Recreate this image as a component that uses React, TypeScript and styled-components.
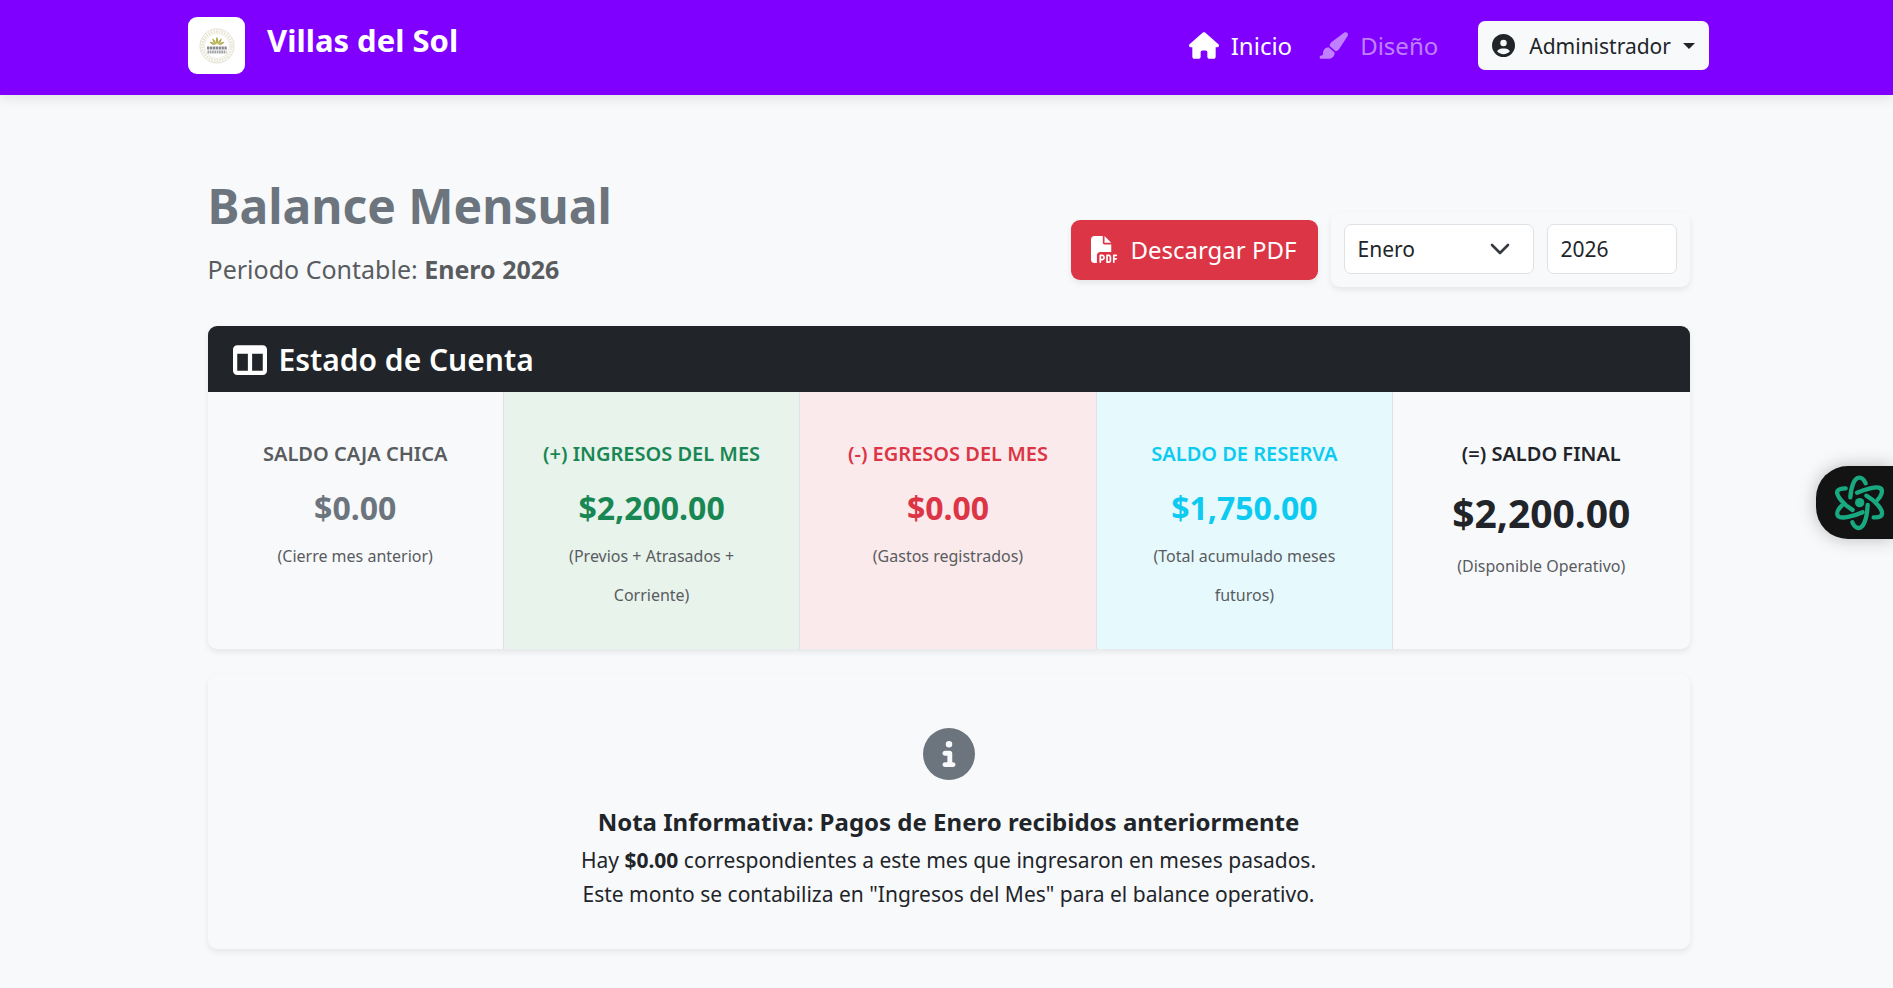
import React, { useState } from 'react';
import styled, { createGlobalStyle } from 'styled-components';
import {
  FaCircleInfo,
  FaCircleUser,
  FaFilePdf,
  FaHouse,
  FaPaintbrush,
  FaTableColumns,
} from 'react-icons/fa6';

const GlobalStyle = createGlobalStyle`
  *, *::before, *::after { box-sizing: border-box; }
  body {
    margin: 0;
    background: #f8f9fb;
    color: #212529;
    font-family: "Noto Sans", "Open Sans", sans-serif;
    font-size: 21px;
  }
  h1, h2, h3, p { margin: 0; }
  button, input, select { font-family: inherit; color: inherit; }
`;

const softShadow = '0 3px 6px rgba(0, 0, 0, 0.08)';

const TopBar = styled.header`
  padding: 17px 0 21px 4px;
  background: #8000ff;
  box-shadow: 0 3px 12px rgba(0, 0, 0, 0.1);
`;

const TopBarInner = styled.div`
  display: flex;
  align-items: center;
  justify-content: space-between;
  max-width: 1521px;
  margin: 0 auto;
`;

const Brand = styled.a`
  display: flex;
  align-items: flex-start;
  gap: 22px;
  color: #fff;
  text-decoration: none;
`;

const LogoBox = styled.span`
  display: grid;
  place-items: center;
  width: 57px;
  height: 57px;
  border-radius: 9px;
  background: #fff;
`;

const BrandName = styled.span`
  font-size: 31px;
  font-weight: 700;
  line-height: 46px;
`;

const Nav = styled.nav`
  display: flex;
  align-items: center;
  gap: 26px;
`;

const NavLink = styled.a<{ $active?: boolean }>`
  display: flex;
  align-items: center;
  gap: 12px;
  color: ${(p) => (p.$active ? '#fff' : 'rgba(255, 255, 255, 0.5)')};
  font-size: 24px;
  line-height: 36px;
  text-decoration: none;

  svg {
    width: 30px;
    height: 27px;
  }
`;

const UserButton = styled.button`
  display: flex;
  align-items: center;
  gap: 14px;
  height: 49px;
  margin-left: 14px;
  padding: 0 14px;
  border: 0;
  border-radius: 7px;
  background: #f8f9fa;
  font-size: 21px;
  line-height: 32px;

  &::after {
    content: '';
    margin-left: -2px;
    border: 6px solid transparent;
    border-top-color: currentColor;
    border-bottom: 0;
  }
`;

const MainArea = styled.main`
  padding: 82px 0 24px 4px;
`;

const MainInner = styled.div`
  display: flex;
  flex-direction: column;
  gap: 25px;
  max-width: 1482px;
  margin: 0 auto;
`;

const PageHead = styled.div`
  display: flex;
  align-items: flex-end;
  justify-content: space-between;
  margin-bottom: 14px;
`;

const Title = styled.h1`
  margin-bottom: 16px;
  color: #6c757d;
  font-size: 48px;
  font-weight: 700;
  line-height: 58px;
`;

const Period = styled.p`
  color: #595c5f;
  font-size: 25px;
  line-height: 36px;
`;

const Actions = styled.div`
  display: flex;
  align-items: center;
  gap: 13px;
`;

const PdfButton = styled.button`
  display: flex;
  align-items: center;
  gap: 12px;
  height: 60px;
  padding: 0 21px 0 20px;
  border: 0;
  border-radius: 9px;
  background: #dc3545;
  color: #fff;
  font-size: 24px;
  line-height: 36px;
  box-shadow: ${softShadow};
`;

const Filters = styled.form`
  display: flex;
  gap: 13px;
  padding: 12px 13px 13px;
  border-radius: 9px;
  box-shadow: ${softShadow};
`;

const MonthField = styled.div`
  position: relative;
  width: 190px;

  svg {
    position: absolute;
    top: 19px;
    right: 24px;
    pointer-events: none;
  }
`;

const fieldStyle = `
  width: 100%;
  height: 50px;
  padding: 0 13px;
  border: 1px solid #dee2e6;
  border-radius: 7px;
  background: #fff;
  font-size: 21px;
`;

const MonthSelect = styled.select`
  ${fieldStyle}
  appearance: none;
`;

const YearInput = styled.input`
  ${fieldStyle}
  max-width: 130px;
`;

const Card = styled.section`
  overflow: hidden;
  border-radius: 9px;
  background: #f8f9fb;
  box-shadow: ${softShadow};
`;

const CardHeader = styled.h2`
  display: flex;
  align-items: center;
  gap: 12px;
  height: 66px;
  padding: 1px 25px 0;
  background: #212529;
  color: #fff;
  font-size: 30px;
  font-weight: 600;
  line-height: 38px;
`;

const Columns = styled.div`
  display: grid;
  grid-template-columns: repeat(5, 1fr);
`;

const Column = styled.div<{ $tint: string }>`
  padding: 50px 38px 34px;
  background: ${(p) => p.$tint};
  text-align: center;

  &:not(:last-child) {
    border-right: 1px solid #dee2e6;
  }
`;

const ColumnLabel = styled.h3<{ $color: string }>`
  margin: 0 -20px 23px;
  color: ${(p) => p.$color};
  font-size: 20px;
  font-weight: 600;
  line-height: 24px;
`;

const Amount = styled.p<{ $color: string; $large?: boolean }>`
  margin-bottom: 10px;
  color: ${(p) => p.$color};
  font-size: ${(p) => (p.$large ? 39 : 32)}px;
  font-weight: 700;
  line-height: ${(p) => (p.$large ? 48 : 38)}px;
`;

const Hint = styled.p`
  color: #595c5f;
  font-size: 16px;
  line-height: 39px;
`;

const Notice = styled(Card)`
  display: flex;
  flex-direction: column;
  align-items: center;
  padding: 54px 24px 38px;
  text-align: center;

  > svg {
    color: #6c757d;
  }
`;

const NoticeTitle = styled.h2`
  margin: 27px 0 6px;
  font-size: 24px;
  font-weight: 700;
  line-height: 30px;
`;

const NoticeText = styled.p`
  font-size: 21px;
  line-height: 34px;
`;

const Assistant = styled.button`
  position: fixed;
  top: 466px;
  right: 0;
  display: flex;
  align-items: center;
  width: 77px;
  height: 73px;
  padding: 0 0 0 17px;
  border: 0;
  border-radius: 32px 0 0 32px;
  background: #131313;
  box-shadow: 0 0 18px rgba(0, 0, 0, 0.25);
`;

const Logo = () => (
  <svg width="36" height="36" viewBox="0 0 36 36" fill="none" aria-hidden="true">
    <circle cx="18" cy="18" r="17" stroke="#e3e0cd" strokeWidth="1" />
    <circle cx="18" cy="18" r="14.6" stroke="#dcd8bf" strokeWidth="2.6" strokeDasharray="1.6 1.1" opacity="0.7" />
    <circle cx="18" cy="18" r="12.6" stroke="#e8e6d8" strokeWidth="0.8" />
    <g fill="#b3ae4d">
      <path d="M18 16.5C16.4 14 16.5 11 18 8.6c1.500 2.400 1.600 5.400 0 7.900z" />
      <path d="M17.400 16.600C14.800 15.400 13.300 13 13.300 10.200c2.400 1.400 3.900 3.600 4.100 6.400z" />
      <path d="M18.600 16.600c2.600-1.200 4.100-3.600 4.100-6.400-2.400 1.400-3.900 3.600-4.100 6.400z" />
      <path d="M16.500 17c-2.500.3-4.700-.9-6-3.200 2.500-.2 4.800 1 6 3.200z" />
      <path d="M19.500 17c2.500.3 4.700-.9 6-3.200-2.500-.2-4.800 1-6 3.200z" />
    </g>
    <g stroke="#8b8c90" strokeWidth="3">
      <path d="M8 20H28" strokeDasharray="2.400 0.500" />
      <path d="M8.500 24H27.500" strokeDasharray="1.700 0.600" opacity="0.8" />
    </g>
  </svg>
);

const Chevron = () => (
  <svg width="20" height="12" viewBox="0 0 20 12" fill="none" aria-hidden="true">
    <path d="M2 2l8 8 8-8" stroke="#343a40" strokeWidth="2.6" strokeLinecap="round" strokeLinejoin="round" />
  </svg>
);

const AtomIcon = () => (
  <svg width="53" height="58" viewBox="120 102 159 174" fill="none" aria-hidden="true">
    <g stroke="#19a980" strokeWidth="13" strokeLinecap="round" strokeLinejoin="round">
      <path d="M172 172C174 140 184 113 199 113C209 113 214 121 218 130" />
      <path d="M192 158C215 148 250 138 261 144C272 150 266 168 253 180" />
      <path d="M220 167C250 184 269 210 267 222C265 232 254 233 242 232" />
      <path d="M224 195C222 238 211 264 197 264C187 264 182 256 178 247" />
      <path d="M209 217C180 230 145 237 136 229C128 220 136 206 147 196" />
      <path d="M179 210C149 193 129 165 133 154C137 146 147 145 158 145" />
    </g>
    <circle cx="200" cy="188" r="14" fill="#19a980" />
  </svg>
);

const summary = [
  { label: 'SALDO CAJA CHICA', amount: '$0.00', hint: '(Cierre mes anterior)', labelColor: '#595c5f', color: '#6c757d', tint: 'transparent' },
  { label: '(+) INGRESOS DEL MES', amount: '$2,200.00', hint: '(Previos + Atrasados + Corriente)', labelColor: '#198754', color: '#198754', tint: '#e8f3ec' },
  { label: '(-) EGRESOS DEL MES', amount: '$0.00', hint: '(Gastos registrados)', labelColor: '#dc3545', color: '#dc3545', tint: '#fbeaec' },
  { label: 'SALDO DE RESERVA', amount: '$1,750.00', hint: '(Total acumulado meses futuros)', labelColor: '#0dcaf0', color: '#0dcaf0', tint: '#e6f9fd' },
  { label: '(=) SALDO FINAL', amount: '$2,200.00', hint: '(Disponible Operativo)', labelColor: '#212529', color: '#212529', tint: 'transparent', large: true },
];

const months = [
  'Enero', 'Febrero', 'Marzo', 'Abril', 'Mayo', 'Junio',
  'Julio', 'Agosto', 'Septiembre', 'Octubre', 'Noviembre', 'Diciembre',
];

export default function App() {
  const [month, setMonth] = useState('Enero');
  const [year, setYear] = useState('2026');

  return (
    <>
      <GlobalStyle />
      <TopBar>
        <TopBarInner>
          <Brand href="#">
            <LogoBox><Logo /></LogoBox>
            <BrandName>Villas del Sol</BrandName>
          </Brand>
          <Nav>
            <NavLink href="#inicio" $active>
              <FaHouse />
              Inicio
            </NavLink>
            <NavLink href="#diseno">
              <FaPaintbrush />
              Diseño
            </NavLink>
            <UserButton type="button" aria-haspopup="menu">
              <FaCircleUser size={23} />
              Administrador
            </UserButton>
          </Nav>
        </TopBarInner>
      </TopBar>

      <MainArea>
        <MainInner>
          <PageHead>
            <div>
              <Title>Balance Mensual</Title>
              <Period>Periodo Contable: <strong>{month} {year}</strong></Period>
            </div>
            <Actions>
              <PdfButton type="button">
                <FaFilePdf size={27} />
                Descargar PDF
              </PdfButton>
              <Filters>
                <MonthField>
                  <MonthSelect aria-label="Mes" value={month} onChange={(e) => setMonth(e.target.value)}>
                    {months.map((m) => <option key={m}>{m}</option>)}
                  </MonthSelect>
                  <Chevron />
                </MonthField>
                <YearInput aria-label="Año" inputMode="numeric" value={year} onChange={(e) => setYear(e.target.value)} />
              </Filters>
            </Actions>
          </PageHead>

          <Card>
            <CardHeader>
              <FaTableColumns size={34} />
              Estado de Cuenta
            </CardHeader>
            <Columns>
              {summary.map((item) => (
                <Column key={item.label} $tint={item.tint}>
                  <ColumnLabel $color={item.labelColor}>{item.label}</ColumnLabel>
                  <Amount $color={item.color} $large={item.large}>{item.amount}</Amount>
                  <Hint>{item.hint}</Hint>
                </Column>
              ))}
            </Columns>
          </Card>

          <Notice>
            <FaCircleInfo size={52} />
            <NoticeTitle>Nota Informativa: Pagos de Enero recibidos anteriormente</NoticeTitle>
            <NoticeText>
              Hay <strong>$0.00</strong> correspondientes a este mes que ingresaron en meses pasados.
            </NoticeText>
            <NoticeText>Este monto se contabiliza en "Ingresos del Mes" para el balance operativo.</NoticeText>
          </Notice>
        </MainInner>
      </MainArea>

      <Assistant type="button" aria-label="Asistente">
        <AtomIcon />
      </Assistant>
    </>
  );
}
